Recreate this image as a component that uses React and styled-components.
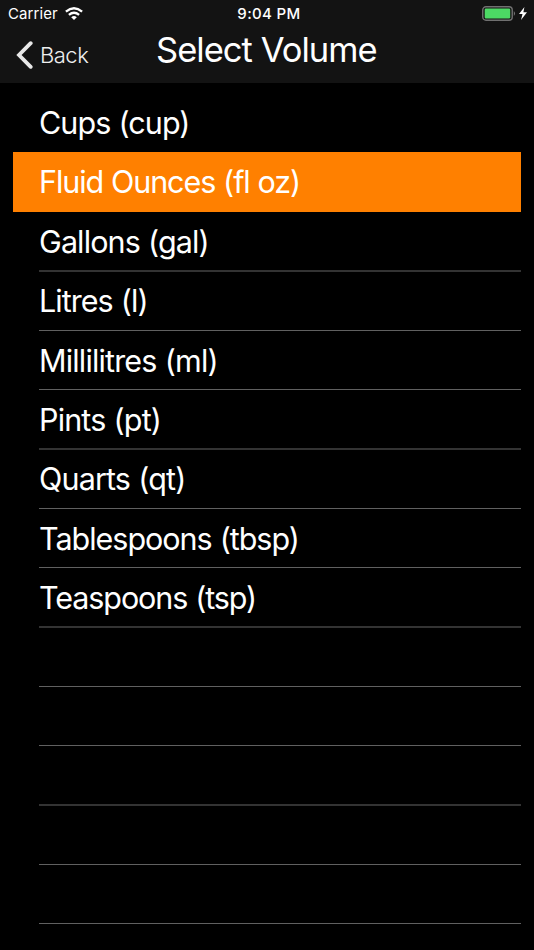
import React from 'react';
import styled, { createGlobalStyle } from 'styled-components';

const Global = createGlobalStyle`
  * { box-sizing: border-box; }
  body { margin: 0; background: #000; color: #fff; font-family: Inter, "Liberation Sans", sans-serif; overflow: hidden; }
`;
const Screen = styled.div`height: 950px; background: #000; display: flex; flex-direction: column;`;
const Header = styled.header`height: 83px; background: #131313; flex: none;`;
const StatusBar = styled.div`
  height: 27px; display: grid; grid-template-columns: 1fr auto 1fr; align-items: center; padding: 0 6px 0 8px;
  font-size: 15px; line-height: 27px;
`;
const Carrier = styled.div`display: flex; align-items: center; gap: 7px;`;
const CarrierName = styled.span`width: 50px; white-space: nowrap; letter-spacing: 0.1px;`;
const Clock = styled.div`font-weight: 500; letter-spacing: 0.35px; padding-left: 2px;`;
const Power = styled.div`display: flex; justify-content: flex-end; align-items: center;`;
const NavBar = styled.div`height: 56px; display: grid; grid-template-columns: 156px 1fr 156px; padding: 0;`;
const Back = styled.div`
  display: flex; align-items: center; gap: 6px; height: 55px; padding-left: 16px; font-size: 22px; color: #eee;
  font-weight: 300; letter-spacing: -0.5px;
`;
const Title = styled.h1`
  margin: 0; font-size: 34.5px; font-weight: 400; line-height: 46px; white-space: nowrap;
  letter-spacing: -0.97px;
`;
const List = styled.ul`list-style: none; margin: 10.14px 13px 0; padding: 0;`;
const Row = styled.li`
  height: 59.35px; display: flex; padding-left: 26px; background: ${p => (p.$selected ? '#ff8000' : 'transparent')};
`;
const Label = styled.div`
  flex: 1; font-size: 30.5px; line-height: 60px; white-space: nowrap; letter-spacing: ${p => p.$tracking}px; word-spacing: 0.4px;
  border-bottom: 1px solid ${p => ({ none: 'transparent', soft: '#333', sharp: '#606060' })[p.$line]};
  box-shadow: ${p => (p.$line === 'soft' ? '0 1px 0 #333' : 'none')};
`;
const items = [
  { name: 'Cups (cup)', tracking: -0.92 },
  { name: 'Fluid Ounces (fl oz)', tracking: -1.08 },
  { name: 'Gallons (gal)', tracking: -0.88 },
  { name: 'Litres (l)', tracking: -0.95 },
  { name: 'Millilitres (ml)', tracking: -0.83 },
  { name: 'Pints (pt)', tracking: -0.85 },
  { name: 'Quarts (qt)', tracking: -0.85 },
  { name: 'Tablespoons (tbsp)', tracking: -1.02 },
  { name: 'Teaspoons (tsp)', tracking: -1.08 },
  ...Array.from({ length: 5 }, () => ({ name: '', tracking: 0 })),
];
const lineFor = i => (i < 2 ? 'none' : i % 3 === 2 ? 'soft' : 'sharp');

export default function App() {
  return (
    <Screen>
      <Global />
      <Header>
        <StatusBar>
          <Carrier><CarrierName>Carrier</CarrierName>
            <svg width="18" height="13" viewBox="0 0 18 13" fill="none" stroke="#fff" strokeWidth="2.3">
              <path d="M.9 4.6Q9-2.2 17.1 4.6M3.9 7.9Q9 3.6 14.1 7.9" /><path d="M6.2 10.2Q9 8 11.8 10.2L9 13Z" fill="#fff" stroke="none" />
            </svg>
          </Carrier>
          <Clock>9:04 PM</Clock>
          <Power>
            <svg width="46" height="15" viewBox="0 0 46 15">
              <rect x=".75" y=".75" width="29.5" height="13.5" rx="3.2" fill="none" stroke="#707070" strokeWidth="1.4" />
              <rect x="2.7" y="2.6" width="25.5" height="9.8" rx="1.2" fill="#4cd964" />
              <path d="M31.8 5Q34.4 7.5 31.8 10Z" fill="#707070" /><path d="M42.4 1L37 8H40.5L39 14L45 6.2H41.4Z" fill="#fff" />
            </svg>
          </Power>
        </StatusBar>
        <NavBar>
          <Back>
            <svg width="18" height="28" viewBox="0 0 18 28" fill="none" stroke="#e8e8e8" strokeWidth="3.8" strokeLinecap="round"><path d="M14.7 2.2L3 14L14.7 25.8" /></svg>
            <span>Back</span>
          </Back>
          <Title>Select Volume</Title>
        </NavBar>
      </Header>
      <List>
        {items.map((item, i) => (
          <Row key={i} $selected={i === 1}>
            <Label $line={lineFor(i)} $tracking={item.tracking}>{item.name}</Label>
          </Row>
        ))}
      </List>
    </Screen>
  );
}
